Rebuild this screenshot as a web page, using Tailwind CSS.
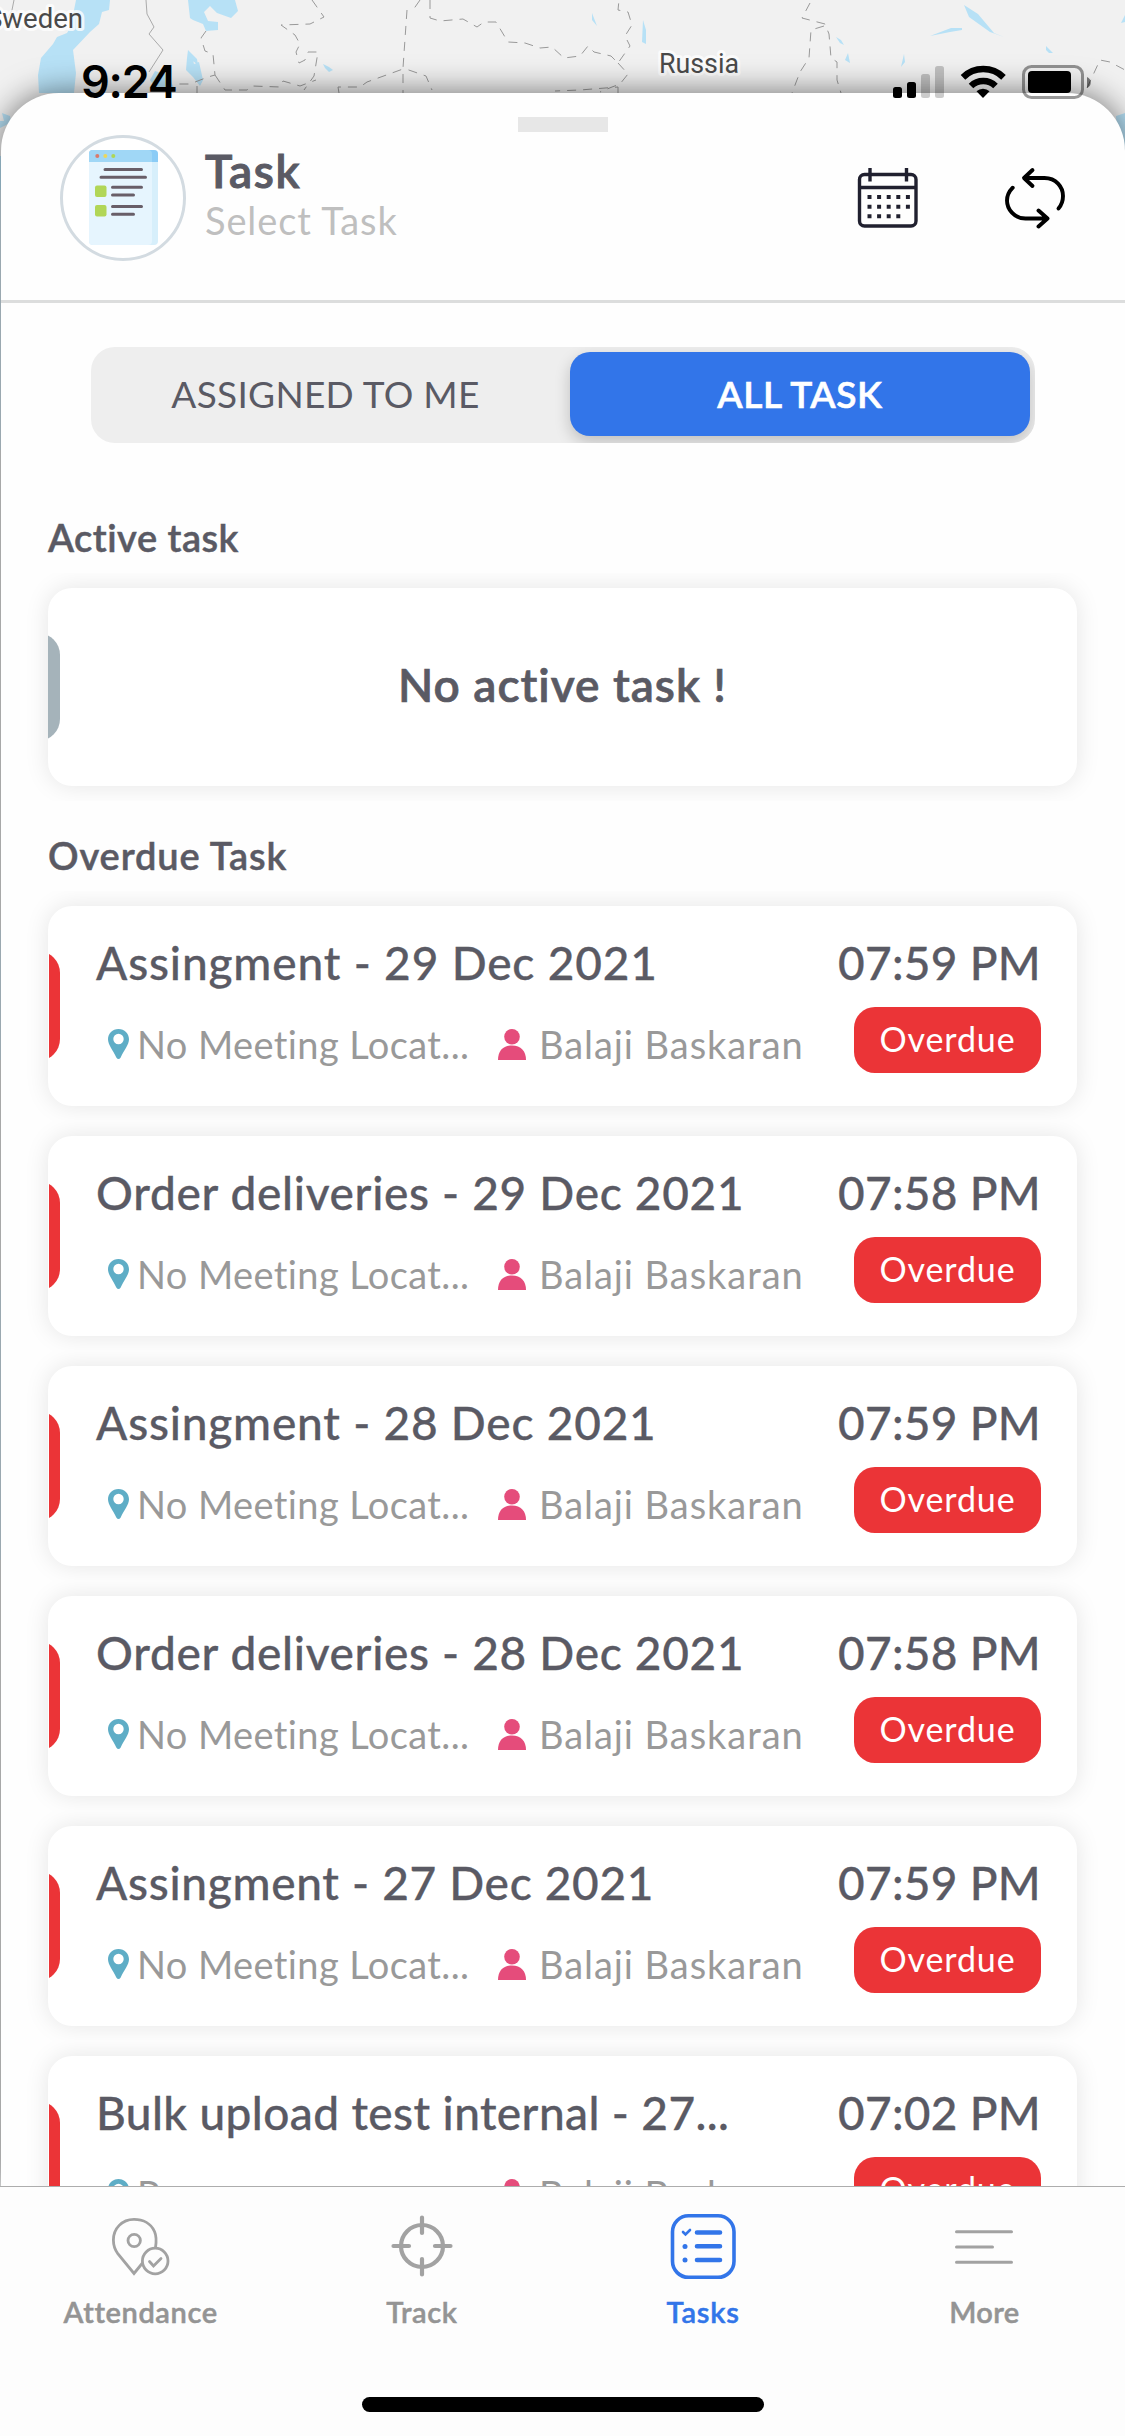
<!DOCTYPE html>
<html lang="en">
<head>
<meta charset="utf-8">
<title>Tasks</title>
<script src="https://cdn.jsdelivr.net/npm/@tailwindcss/browser@4"></script>
</head>
<body class="relative flex h-[2436px] w-[1125px] flex-col overflow-hidden bg-[#e4e5e6] font-['Lato','Open_Sans',sans-serif] text-[#5a5a64]">

<!-- Map behind the sheet -->
<svg class="absolute left-0 top-0" width="1125" height="2186" viewBox="0 0 1125 2186" fill="none">
  <rect width="1125" height="190" fill="#f1f1f1"/>
  <g fill="#b7e1f6">
    <path d="M76 0H110L109 10L102 12L99 24L90 32L73 50L76 73L74 93H39L38 75L41 58L53 44L57 37L67 33L70 28L74 10Z"/>
    <path d="M188 0H235L238 11L231 18L217 13L210 6L204 12L208 21L218 22V30L206 31L203 24L193 20L190 18Z"/>
    <path d="M188 50L197 59L198 65L193 61L192 56L194 64L199 62L203 80L200 86L193 77L186 70L187 58Z"/>
    <path d="M150 80L155 71L168 75L174 88L158 91Z"/>
    <path d="M323 64L329 67L333 70L329 72L325 68Z"/>
    <path d="M592 13L597 26L592 20ZM643 20L646 30V44L642 42ZM964 5L978 14L994 33L1004 37L990 32L969 17ZM930 36L951 28L962 28V30L950 32ZM836 37L841 40L844 45L840 43ZM848 53L850 63L845 60ZM904 54L905 62L901 67ZM1046 46L1053 53H1049L1046 50ZM1125 15L1121 23L1125 22Z"/>
    <path d="M2 113L10 116L11 122L6 125L0 128V121H4ZM1116 116L1125 113V150H1118ZM0 156H10V190H0Z"/>
  </g>
  <path d="M0 190H2V450H0ZM0 930H2V1060H0ZM0 1290H2V1560H0Z" fill="#d3e6f0"/>
  <path d="M14 0L12 10L8 18M146 0L147 14L154 27L149 34L163 50L149 72" stroke="#aaa"/>
  <g stroke="#999" stroke-dasharray="9 7">
    <path d="M206 31L201 38L205 51L213 54L215 75L208 77L190 84L178 84M215 75L225 90L247 90L252 86L280 87L283 81L300 86L316 80M197 93V86"/>
    <path d="M312 0L324 17L310 24L281 25L295 35L300 44L296 52L299 63L305 60L308 52L318 52L314 76L304 90M339 93L338 87L360 87L367 82L403 69V93M407 10L403 68L426 76L432 90M420 0L413 10M430 0V18L440 21L463 19L477 27L484 22L496 22L508 42L525 43L540 48L552 47L564 58L580 56L588 46L594 52L611 56L618 63L630 46L625 36L632 25L628 12L618 10L619 0"/>
    <path d="M618 63L628 74L620 84L612 87L600 92M618 93V87L580 90L555 91"/>
    <path d="M810 3L802 18L825 24L829 34L831 58L837 62V80L841 93M824 26L811 30L809 58L800 72L792 93M1087 88L1100 60L1110 62L1125 70"/>
  </g>
  <g font-family="Roboto, sans-serif" font-size="27" font-weight="400" fill="#4a4a4a" stroke="#fff" stroke-opacity=".75" stroke-width="6" stroke-linejoin="round" paint-order="stroke">
    <text x="-14" y="28" textLength="97" lengthAdjust="spacingAndGlyphs">Sweden</text>
    <text x="659" y="73" textLength="80" lengthAdjust="spacingAndGlyphs">Russia</text>
  </g>
</svg>

<!-- Status bar, lies over both map and sheet -->
<div class="absolute inset-x-0 top-0 z-10 flex h-[110px] items-start justify-between">
  <span class="ml-[81px] mt-[54px] font-['Inter'] text-[45px] font-semibold leading-[56px] tracking-[-1.2px] text-black">9:24</span>
  <svg class="mr-[30px] mt-[60px]" width="206" height="44" viewBox="889 60 206 44" fill="#000">
    <rect x="893" y="87" width="9" height="11" rx="2.5"/>
    <rect x="907" y="82" width="9" height="16" rx="2.5"/>
    <rect x="921" y="74" width="9" height="24" rx="2.5" fill-opacity=".2"/>
    <rect x="935" y="66" width="9" height="32" rx="2.5" fill-opacity=".2"/>
    <g fill="none" stroke="#000" stroke-width="6.5">
      <path d="M963 77.300A29 29 0 0 1 1003.500 77.300"/>
      <path d="M971 86A17.500 17.500 0 0 1 995.500 86"/>
    </g>
    <path d="M983 98L976.500 91.300A9.500 9.500 0 0 1 989.500 91.300Z"/>
    <rect x="1023.500" y="66.500" width="59" height="31" rx="8" fill="none" stroke="#000" stroke-opacity=".4" stroke-width="3"/>
    <rect x="1028" y="71" width="43" height="22" rx="4"/>
    <path d="M1087 77C1092 79 1092 86 1087 88Z" fill-opacity=".5"/>
  </svg>
</div>

<!-- Sheet -->
<main class="relative ml-px mt-[93px] min-h-0 flex-1 overflow-hidden rounded-t-[58px] bg-[#fefefe] shadow-[0_0_32px_rgba(0,0,0,0.55)]">
  <div class="absolute left-[517px] top-6 h-[15px] w-[90px] bg-[#e7e7e7]"></div>
  <header class="flex h-[210px] items-start border-b-[3px] border-[#dcdddd] pl-[59px] pr-[57px] pt-[42px]">
    <svg width="126" height="126" viewBox="60 135 126 126">
      <circle cx="123" cy="198" r="61.500" fill="#fff" stroke="#d3dbe1" stroke-width="3"/>
      <rect x="89" y="150" width="69" height="95" rx="4" fill="#d7effb"/>
      <path d="M89 154a4 4 0 0 1 4-4H148q4 0 4 4V241q0 4-4 4H93a4 4 0 0 1-4-4Z" fill="#e6f5fe"/>
      <path d="M89 162V154a4 4 0 0 1 4-4H154a4 4 0 0 1 4 4V162Z" fill="#8bccf6"/>
      <path d="M89 162V154a4 4 0 0 1 4-4H148q4 0 4 4V162Z" fill="#a0d7f6"/>
      <circle cx="97.300" cy="156" r="2" fill="#d97b6c"/><circle cx="105.300" cy="156" r="2" fill="#ecd75c"/><circle cx="113.300" cy="156" r="2" fill="#afd755"/>
      <rect x="95" y="185.500" width="11.500" height="11.500" rx="2" fill="#b1d657"/><rect x="95" y="205" width="11.500" height="11.500" rx="2" fill="#b1d657"/>
      <path d="M105 169.500H141.500M101 177.300H145.500M112.500 187.300H141.500M112.500 195H133.500M112.500 206.600H141.500M112.500 214.300H133.500" stroke="#685e68" stroke-width="3" stroke-linecap="round"/>
    </svg>
    <div class="ml-[19px] flex flex-1 flex-col pt-[9px]">
      <h1 class="text-[46px] font-semibold leading-[54px] tracking-[1.7px] [-webkit-text-stroke:1px]">Task</h1>
      <p class="text-[38px] leading-[44px] tracking-[0.9px] text-[#bfbfbf]">Select Task</p>
    </div>
    <svg class="mt-[30px]" width="66" height="66" viewBox="855 165 66 66" fill="none" stroke="#20202f" stroke-width="3.400">
      <rect x="859.500" y="174.500" width="56.500" height="51.500" rx="5"/>
      <path d="M859 187.500H917M870 168V181.500M906.500 168V181.500"/>
      <path d="M867.500 197H910M867.500 206.700H910" stroke-width="4" stroke-dasharray="4 5.600"/>
      <path d="M867.500 216.300H901" stroke-width="4" stroke-dasharray="4 5.600"/>
    </svg>
    <svg class="ml-[81px] mt-[30px]" width="66" height="66" viewBox="1002 165 66 66" fill="none" stroke="#000" stroke-width="3.900" stroke-linecap="round" stroke-linejoin="round">
      <path d="M1032.500 170L1024 178L1032.500 186M1025 178H1044.500C1056 178 1063 187 1063 196C1063 201 1061.500 205 1058.500 208.500"/>
      <path d="M1038.500 210.500L1047.500 218.500L1038.500 226.500M1046.500 218.500H1025.500C1014 218.500 1007 209 1007 200.500C1007 195.500 1009.500 191 1012.700 187.700"/>
    </svg>
  </header>

  <div class="ml-[90px] mt-11 flex h-24 w-[944px] overflow-hidden rounded-[24px] bg-[#eeeeee] pb-[7px] pr-[5px] pt-[5px]">
    <div class="flex w-[479px] items-center justify-center pr-[10px] text-[37px] leading-[44px] tracking-[0.3px]">ASSIGNED TO ME</div>
    <div class="flex flex-1 items-center justify-center rounded-[20px] bg-[#3275e9] text-[37px] font-semibold leading-[44px] tracking-[0.6px] text-white shadow-[0_6px_16px_rgba(0,0,0,0.2)] [-webkit-text-stroke:0.6px]">ALL TASK</div>
  </div>

  <h2 class="ml-[47px] mt-[72px] text-[38px] font-semibold leading-[44px] tracking-[0.5px] [-webkit-text-stroke:0.5px]">Active task</h2>
  <section class="mt-[14px] overflow-hidden px-[47px] py-[15px]">
    <div class="relative flex h-[198px] w-[1029px] items-center justify-center rounded-[24px] bg-white shadow-[0_0_24px_rgba(0,0,0,0.1)]">
      <div class="absolute inset-y-0 left-0 flex w-3 items-center overflow-hidden"><i class="-ml-8 h-[108px] w-11 shrink-0 rounded-[22px] bg-[#a5b3ba]"></i></div>
      <p class="-mt-[5px] text-[46px] font-semibold leading-[54px] tracking-[1px] [-webkit-text-stroke:0.7px]">No active task !</p>
    </div>
  </section>

  <h2 class="ml-[47px] mt-8 text-[38px] font-semibold leading-[44px] tracking-[0.9px] [-webkit-text-stroke:0.5px]">Overdue Task</h2>
  <ul id="list" class="mt-[14px]"></ul>
</main>

<template id="card">
  <li class="overflow-hidden px-[47px] py-[15px]">
    <article class="relative flex h-[200px] w-[1029px] justify-between rounded-[24px] bg-white pl-[48px] pr-9 pt-[30px] shadow-[0_0_24px_rgba(0,0,0,0.1)]">
      <div class="absolute inset-y-0 left-px flex w-[11px] items-center overflow-hidden"><i class="-ml-[33px] h-[110px] w-11 shrink-0 rounded-[22px] bg-[#eb3437]"></i></div>
      <div class="flex flex-col gap-8">
        <h3 class="whitespace-nowrap text-[46px] font-medium leading-[54px] [-webkit-text-stroke:0.3px]"></h3>
        <div class="flex items-center text-[38px] leading-[44px] text-[#999]">
          <svg class="ml-[12px]" width="21" height="30" viewBox="0 0 21 30"><path fill="#5eadc6" fill-rule="evenodd" d="M10.500 0C4.500 0 0 4.500 0 10.300C0 16 5 21 8.300 28.500Q10.500 31.500 12.700 28.500C16 21 21 16 21 10.300C21 4.500 16.500 0 10.500 0ZM10.500 4.800A5.200 5.200 0 1 1 10.500 15.200A5.200 5.200 0 1 1 10.500 4.800Z"/></svg>
          <span class="place ml-[8px] w-[361px] whitespace-nowrap tracking-[0.4px]"></span>
          <svg width="28" height="31" viewBox="0 0 28 31" fill="#e54c7b"><circle cx="14" cy="7.800" r="7.800"/><path d="M0 31C0 22 5 16.500 14 16.500S28 22 28 31Z"/></svg>
          <span class="ml-[13px] whitespace-nowrap tracking-[0.95px]">Balaji Baskaran</span>
        </div>
      </div>
      <div class="flex flex-col items-end gap-[17px]">
        <time class="text-[46px] font-medium leading-[54px] tracking-[0.3px] [-webkit-text-stroke:0.3px]"></time>
        <span class="flex h-[66px] w-[187px] items-center justify-center rounded-[21px] bg-[#eb3437] pb-[2px] text-[34px] leading-[40px] tracking-[0.9px] text-white">Overdue</span>
      </div>
    </article>
  </li>
</template>

<!-- Tab bar -->
<nav class="relative h-[250px] border-t border-[#adadad] bg-[#fdfdfd] text-[29px] font-semibold leading-9 text-[#949494]">
  <div class="grid grid-cols-4 pt-[24px] [-webkit-text-stroke:0.5px]">
    <a class="flex flex-col items-center gap-[13px] tracking-[0.6px]">
      <svg width="70" height="70" viewBox="105 2211 70 70" fill="none" stroke="#a2a2a2" stroke-width="2.800">
        <path d="M154.500 2247.500C155.500 2241 155.500 2236 153.500 2231.500C150 2223.500 142 2219.400 133 2219.400C121 2219.400 112.400 2228.500 112.400 2240C112.400 2246 114 2250 117 2254L133 2273.500L141.500 2263"/>
        <circle cx="133.200" cy="2240.500" r="6.200"/><circle cx="154.200" cy="2261" r="12.800"/>
        <path d="M148.500 2261.500L152.500 2266L160 2258.500" stroke-linecap="round"/>
      </svg>
      <span>Attendance</span>
    </a>
    <a class="flex flex-col items-center gap-[13px] tracking-[0.6px]">
      <svg width="70" height="70" viewBox="386 2211 70 70" fill="none" stroke="#a2a2a2" stroke-width="4.200" stroke-linecap="round">
        <circle cx="421" cy="2246" r="21"/><path d="M421 2217.500V2233M421 2259V2274.500M392.500 2246H408M434 2246H449.500"/>
      </svg>
      <span>Track</span>
    </a>
    <a class="flex flex-col items-center gap-[13px] tracking-[0.8px] text-[#3275e9]">
      <svg width="70" height="70" viewBox="668.500 2211 70 70" fill="none" stroke="#3275e9" stroke-width="3.600" stroke-linecap="round">
        <rect x="673" y="2215.800" width="61.500" height="61.500" rx="16"/>
        <path d="M697.500 2232.500H720.500M697.500 2246.300H720.500M697.500 2260H720.500" stroke-width="4.600"/>
        <path d="M683.500 2232L686 2234.500L690.500 2230" stroke-width="2.600"/>
        <circle cx="685.500" cy="2246.500" r="2.500" fill="#3275e9" stroke="none"/><circle cx="685.500" cy="2260" r="2.500" fill="#3275e9" stroke="none"/>
      </svg>
      <span>Tasks</span>
    </a>
    <a class="flex flex-col items-center gap-[13px] tracking-[0.4px]">
      <svg width="70" height="70" viewBox="949 2211 70 70" fill="none" stroke="#a2a2a2" stroke-width="3" stroke-linecap="round">
        <path d="M956.500 2231.800H1011.500M956.500 2247H992.500M956.500 2262.200H1011.500"/>
      </svg>
      <span>More</span>
    </a>
  </div>
  <div class="mx-auto mt-[67px] h-[15px] w-[402px] rounded-full bg-black"></div>
</nav>

<script>
const tasks = [
  ["Assingment - 29 Dec 2021", "07:59 PM", "No Meeting Locat...", 0.85],
  ["Order deliveries - 29 Dec 2021", "07:58 PM", "No Meeting Locat...", 0.7],
  ["Assingment - 28 Dec 2021", "07:59 PM", "No Meeting Locat...", 0.8],
  ["Order deliveries - 28 Dec 2021", "07:58 PM", "No Meeting Locat...", 0.7],
  ["Assingment - 27 Dec 2021", "07:59 PM", "No Meeting Locat...", 0.7],
  ["Bulk upload test internal - 27...", "07:02 PM", "P...", 0.4]
];
const list = document.getElementById("list");
const card = document.getElementById("card");
for (const [title, time, place, spacing] of tasks) {
  const node = card.content.cloneNode(true);
  const heading = node.querySelector("h3");
  heading.textContent = title;
  heading.style.letterSpacing = spacing + "px";
  node.querySelector("time").textContent = time;
  node.querySelector(".place").textContent = place;
  list.appendChild(node);
}
</script>
</body>
</html>
